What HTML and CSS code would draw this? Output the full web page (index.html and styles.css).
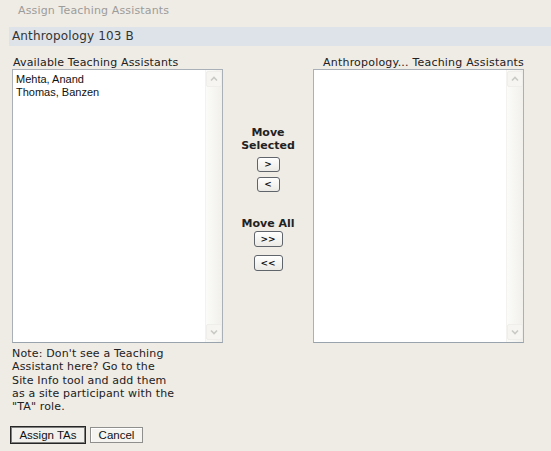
FILE: index.html
```html
<!DOCTYPE html>
<html>
<head>
<meta charset="utf-8">
<link rel="stylesheet" href="styles.css">
</head>
<body>
<div class="title">Assign Teaching Assistants</div>
<div class="band">Anthropology 103 B</div>
<div class="main">
  <div class="col">
    <div class="label">Available Teaching Assistants</div>
    <div class="listbox">
      <div class="items">
        <div class="item">Mehta, Anand</div>
        <div class="item">Thomas, Banzen</div>
      </div>
      <div class="scroll">
        <svg class="arr" width="14" height="14" viewBox="0 0 14 14"><path d="M4 8.5 L7 5.5 L10 8.5" fill="none" stroke="#c9c9c6" stroke-width="1.6"/></svg>
        <svg class="arr" width="14" height="14" viewBox="0 0 14 14"><path d="M4 5.5 L7 8.5 L10 5.5" fill="none" stroke="#c9c9c6" stroke-width="1.6"/></svg>
      </div>
    </div>
    <div class="note">Note: Don't see a Teaching<br>Assistant here? Go to the<br>Site Info tool and add them<br>as a site participant with the<br>"TA" role.</div>
  </div>
  <div class="mid">
    <div class="mlabel">Move<br>Selected</div>
    <button class="mbtn one first">&gt;</button>
    <button class="mbtn one second">&lt;</button>
    <div class="mlabel all">Move All</div>
    <button class="mbtn two third">&gt;&gt;</button>
    <button class="mbtn two fourth">&lt;&lt;</button>
  </div>
  <div class="col">
    <div class="label right">Anthropology... Teaching Assistants</div>
    <div class="listbox">
      <div class="items"></div>
      <div class="scroll">
        <svg class="arr" width="14" height="14" viewBox="0 0 14 14"><path d="M4 8.5 L7 5.5 L10 8.5" fill="none" stroke="#c9c9c6" stroke-width="1.6"/></svg>
        <svg class="arr" width="14" height="14" viewBox="0 0 14 14"><path d="M4 5.5 L7 8.5 L10 5.5" fill="none" stroke="#c9c9c6" stroke-width="1.6"/></svg>
      </div>
    </div>
  </div>
</div>
<div class="actions">
  <button class="btn primary">Assign TAs</button>
  <button class="btn">Cancel</button>
</div>
</body>
</html>
```
FILE: styles.css
```css
html, body {
  margin: 0;
  padding: 0;
  background: #efebe5;
}
body {
  font-family: "DejaVu Sans", Verdana, sans-serif;
  font-size: 11px;
  letter-spacing: 0.15px;
  color: #222;
}
.title {
  padding: 4px 0 0 18px;
  line-height: 14px;
  color: #9c9c9a;
}
.band {
  margin: 9px 0 0 9px;
  height: 19px;
  line-height: 19px;
  padding-left: 3px;
  background: #dde3e9;
  font-size: 12px;
  color: #333;
}
.main {
  display: flex;
  margin: 10px 0 0 12px;
}
.col {
  width: 211px;
  display: flex;
  flex-direction: column;
}
.label {
  line-height: 13px;
  padding-left: 1px;
  color: #222;
  white-space: nowrap;
}
.label.right {
  text-align: right;
  padding-left: 0;
  letter-spacing: 0.2px;
}
.listbox {
  height: 274px;
  box-sizing: border-box;
  border: 1px solid #aab0b7;
  border-bottom-color: #98a3ae;
  background: #fff;
  display: flex;
}
.items {
  flex: 1;
  padding: 3px 3px;
  font-family: "Liberation Sans", Arial, sans-serif;
  font-size: 11px;
  line-height: 13px;
  letter-spacing: 0;
  color: #111;
}
.scroll {
  width: 16px;
  display: flex;
  flex-direction: column;
  justify-content: space-between;
  align-items: center;
  background: linear-gradient(to right, #fbfbf9, #f1f0eb);
  border-left: 1px solid #f3f2ee;
  padding: 1px 0 2px;
}
.arr {
  display: block;
  border: 1px solid #efeeea;
  border-radius: 2px;
  background: #f6f5f1;
}
.note {
  margin-top: 4px;
  line-height: 13.3px;
  color: #222;
  white-space: nowrap;
}
.mid {
  width: 90px;
  display: flex;
  flex-direction: column;
  align-items: center;
  padding-top: 70px;
}
.mlabel {
  font-weight: bold;
  line-height: 13px;
  text-align: center;
  color: #222;
  letter-spacing: 0;
}
.mlabel.all {
  margin-top: 25px;
}
.mbtn {
  font-family: "DejaVu Sans", Verdana, sans-serif;
  font-weight: bold;
  font-size: 9px;
  letter-spacing: 0;
  color: #111;
  border: 1px solid #5f656b;
  border-radius: 3px;
  background: linear-gradient(#ffffff, #ebeae5);
  padding: 0;
  margin: 0;
  line-height: 13px;
}
.mbtn.one {
  width: 23px;
  height: 15px;
}
.mbtn.two {
  width: 29px;
  height: 16px;
}
.first { margin-top: 5px; }
.second { margin-top: 5px; }
.third { margin-top: 1px; }
.fourth { margin-top: 8px; }
.actions {
  display: flex;
  align-items: center;
  gap: 4px;
  margin: 13px 0 0 10px;
}
.btn {
  font-family: "Liberation Sans", Arial, sans-serif;
  font-size: 11.5px;
  letter-spacing: 0;
  color: #111;
  height: 16px;
  width: 53px;
  padding: 0;
  margin: 0;
  border: 1px solid #8f8f8d;
  background: #f5f4f1;
  box-shadow: inset 1px 1px 0 #fff;
}
.btn.primary {
  width: 76px;
  height: 18px;
  border: 1px solid #262626;
  box-shadow: inset 0 0 0 1px #7e7e7c;
  background: #f1f0ed;
}
```
